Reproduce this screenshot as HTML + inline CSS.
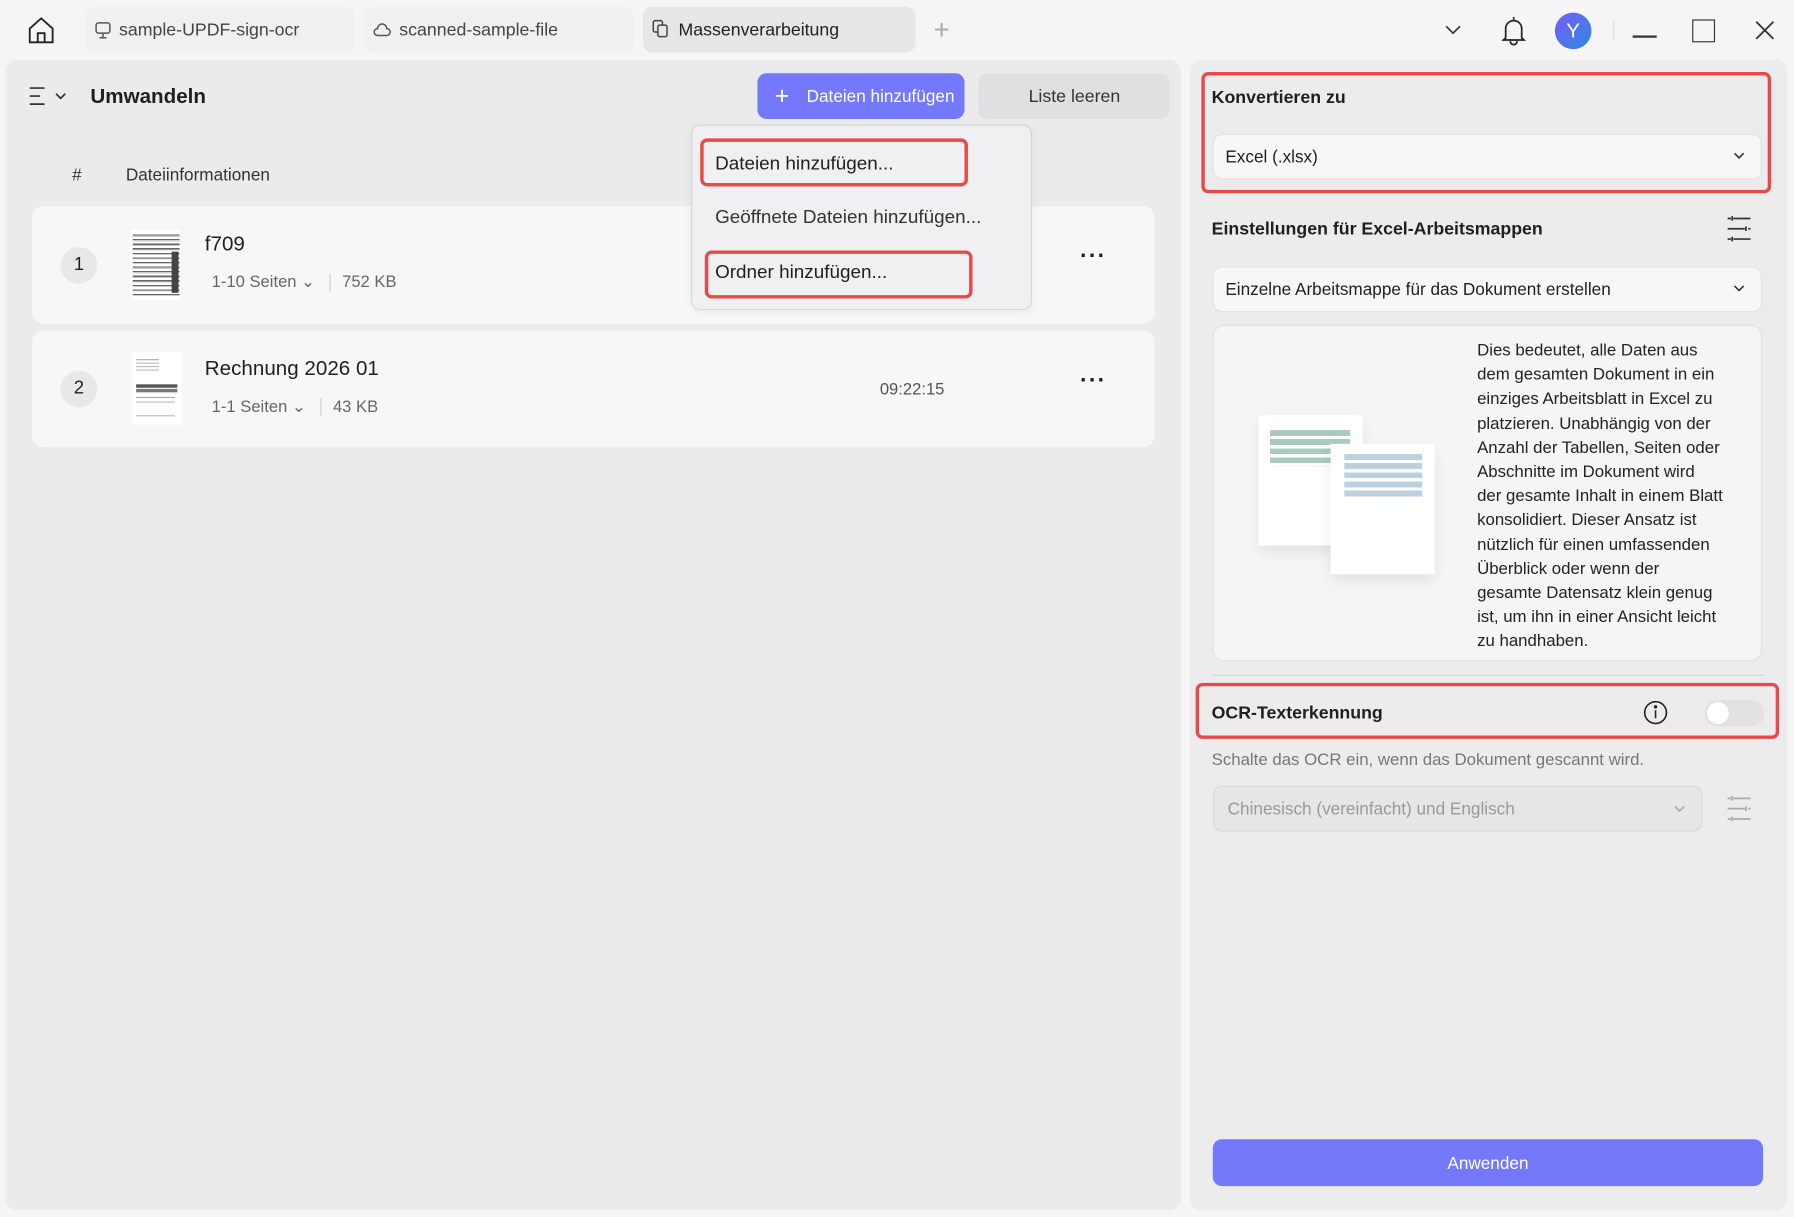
<!DOCTYPE html>
<html><head><meta charset="utf-8"><style>
html,body{margin:0;padding:0;width:1794px;height:1217px;overflow:hidden;background:#f5f5f6;}
#s{position:absolute;left:0;top:0;width:1568px;height:1064px;transform:scale(1.14413,1.14380);transform-origin:0 0;font-family:"Liberation Sans",sans-serif;color:#1f1f1f;}
.a{position:absolute;}
.t{position:absolute;white-space:nowrap;line-height:1;}
.red{position:absolute;border:3px solid #e84a4a;border-radius:6px;box-sizing:border-box;}
.sel{position:absolute;background:#f7f7f8;border:1px solid #e2e2e4;border-radius:8px;box-sizing:border-box;}
</style></head><body><div id="s">
<svg class="a" style="left:22px;top:12px" width="28" height="28" viewBox="0 0 28 28" fill="none" stroke="#222" stroke-width="1.6"><path d="M4 13 L14 4 L24 13 V25 H4 Z"/><path d="M11 25 V17 H17 V25"/></svg>
<div class="a" style="left:75px;top:6px;width:235px;height:40px;background:#f0f0f2;border-radius:8px"></div>
<svg class="a" style="left:83px;top:19px" width="14" height="16" viewBox="0 0 14 16" fill="none" stroke="#555" stroke-width="1.3"><rect x="1" y="1" width="12" height="9" rx="2"/><path d="M7 10v4M4 14h6"/></svg>
<div class="t" style="left:104px;top:19px;font-size:15.5px;color:#444">sample-UPDF-sign-ocr</div>
<div class="a" style="left:318px;top:6px;width:236px;height:40px;background:#f0f0f2;border-radius:8px"></div>
<svg class="a" style="left:326px;top:19px" width="16" height="14" viewBox="0 0 16 14" fill="none" stroke="#555" stroke-width="1.3"><path d="M4 12h8a3 3 0 0 0 0-6 4 4 0 0 0-8 0 3 3 0 0 0 0 6z"/></svg>
<div class="t" style="left:349px;top:19px;font-size:15.5px;color:#444">scanned-sample-file</div>
<div class="a" style="left:562px;top:6px;width:238px;height:40px;background:#e6e6e8;border-radius:8px"></div>
<svg class="a" style="left:570px;top:17px" width="14" height="16" viewBox="0 0 14 16" fill="none" stroke="#444" stroke-width="1.3"><rect x="1" y="1" width="8" height="10" rx="1.5"/><rect x="5" y="5" width="8" height="10" rx="1.5" fill="#e6e6e8"/></svg>
<div class="t" style="left:593px;top:19px;font-size:15.5px;color:#222">Massenverarbeitung</div>
<div class="t" style="left:816px;top:15px;font-size:24px;color:#aaa;font-weight:300">+</div>
<svg class="a" style="left:1262px;top:20px" width="16" height="12" viewBox="0 0 16 12" fill="none" stroke="#333" stroke-width="1.5"><path d="M2 3l6 6 6-6"/></svg>
<svg class="a" style="left:1311px;top:13px" width="24" height="28" viewBox="0 0 24 28" fill="none" stroke="#222" stroke-width="1.5"><path d="M12 2v2M5 20V12a7 7 0 0 1 14 0v8l2 2H3z"/><path d="M9 23a3 3 0 0 0 6 0"/></svg>
<div class="a" style="left:1359px;top:11px;width:32px;height:32px;border-radius:50%;background:linear-gradient(135deg,#7a5cf5,#2a8ae0);color:#fff;font-size:18px;text-align:center;line-height:32px">Y</div>
<div class="a" style="left:1410px;top:18px;width:1px;height:18px;background:#ddd"></div>
<div class="a" style="left:1427px;top:31px;width:21px;height:1.5px;background:#333"></div>
<div class="a" style="left:1479px;top:17px;width:18px;height:18px;border:1.6px solid #333"></div>
<svg class="a" style="left:1533px;top:17px" width="19" height="19" viewBox="0 0 19 19" stroke="#333" stroke-width="1.6"><path d="M2 2l15 15M17 2L2 17"/></svg>

<div class="a" style="left:5px;top:52px;width:1027px;height:1006px;background:#ebebed;border-radius:10px"></div>
<svg class="a" style="left:25px;top:75px" width="36" height="18" viewBox="0 0 36 18" fill="none" stroke="#333" stroke-width="1.5"><path d="M1 2h13M1 9h9M1 16h13"/><path d="M24 7l4 4 4-4"/></svg>
<div class="t" style="left:79px;top:75px;font-size:18px;font-weight:bold">Umwandeln</div>
<div class="a" style="left:662px;top:64px;width:181px;height:40px;background:#7478fb;border-radius:8px"></div>
<div class="t" style="left:677px;top:73px;font-size:22px;color:#fff;font-weight:300">+</div>
<div class="t" style="left:705px;top:77px;font-size:15px;color:#fff">Dateien hinzufügen</div>
<div class="a" style="left:855px;top:64px;width:167px;height:40px;background:#e0e0e2;border-radius:8px"></div>
<div class="t" style="left:899px;top:77px;font-size:15.5px;color:#333">Liste leeren</div>
<div class="t" style="left:63px;top:146px;font-size:15px;color:#333">#</div>
<div class="t" style="left:110px;top:146px;font-size:15px;color:#333">Dateiinformationen</div>

<div class="a" style="left:28px;top:180px;width:981px;height:103px;background:#f7f7f8;border-radius:10px"></div>
<div class="a" style="left:53px;top:216px;width:32px;height:32px;background:#e8e8ea;border-radius:50%;text-align:center;line-height:32px;font-size:16px">1</div>
<div class="a" style="left:115px;top:201px;width:43px;height:61px;background:#fff"></div>
<div class="a" style="left:116px;top:203px;width:41px;height:57px;background:repeating-linear-gradient(#fff 0 2px,#666 2px 3px,#ccc 3px 4px)"></div>
<div class="a" style="left:150px;top:220px;width:6px;height:36px;background:#444"></div>
<div class="t" style="left:179px;top:204px;font-size:18px">f709</div>
<div class="t" style="left:185px;top:240px;font-size:14.5px;color:#666">1-10 Seiten ⌄</div>
<div class="a" style="left:288px;top:239px;width:1px;height:16px;background:#ccc"></div>
<div class="t" style="left:299px;top:240px;font-size:14.5px;color:#666">752 KB</div>
<div class="t" style="left:944px;top:214px;font-size:20px;font-weight:bold;letter-spacing:1px">···</div>

<div class="a" style="left:28px;top:289px;width:981px;height:102px;background:#f7f7f8;border-radius:10px"></div>
<div class="a" style="left:53px;top:324px;width:32px;height:32px;background:#e8e8ea;border-radius:50%;text-align:center;line-height:32px;font-size:16px">2</div>
<div class="a" style="left:115px;top:308px;width:44px;height:63px;background:#fff"></div>
<div class="a" style="left:119px;top:314px;width:20px;height:1px;background:#aaa;box-shadow:0 3px 0 #bbb,0 6px 0 #bbb,0 9px 0 #bbb"></div>
<div class="a" style="left:119px;top:336px;width:36px;height:3px;background:#555;box-shadow:0 4px 0 #777"></div>
<div class="a" style="left:119px;top:347px;width:34px;height:1px;background:#aaa;box-shadow:0 4px 0 #bbb,0 16px 0 #bbb"></div>
<div class="t" style="left:179px;top:313px;font-size:18px">Rechnung 2026 01</div>
<div class="t" style="left:185px;top:349px;font-size:14.5px;color:#666">1-1 Seiten ⌄</div>
<div class="a" style="left:280px;top:348px;width:1px;height:16px;background:#ccc"></div>
<div class="t" style="left:291px;top:349px;font-size:14.5px;color:#666">43 KB</div>
<div class="t" style="left:769px;top:334px;font-size:14.5px;color:#555">09:22:15</div>
<div class="t" style="left:944px;top:323px;font-size:20px;font-weight:bold;letter-spacing:1px">···</div>

<div class="a" style="left:604px;top:109px;width:298px;height:162px;background:#f0f0f2;border:1px solid #d6d6d8;border-radius:8px;box-sizing:border-box;box-shadow:0 2px 8px rgba(0,0,0,.06)"></div>
<div class="red" style="left:612px;top:121px;width:234px;height:42px"></div>
<div class="t" style="left:625px;top:135px;font-size:16.5px">Dateien hinzufügen...</div>
<div class="t" style="left:625px;top:182px;font-size:16.5px;color:#333">Geöffnete Dateien hinzufügen...</div>
<div class="red" style="left:616px;top:219px;width:234px;height:42px"></div>
<div class="t" style="left:625px;top:230px;font-size:16.5px">Ordner hinzufügen...</div>

<div class="a" style="left:1040px;top:52px;width:522px;height:1006px;background:#ececed;border-radius:10px"></div>
<div class="red" style="left:1050px;top:63px;width:498px;height:106px"></div>
<div class="t" style="left:1059px;top:78px;font-size:15.5px;font-weight:bold">Konvertieren zu</div>
<div class="sel" style="left:1060px;top:117px;width:480px;height:40px"></div>
<div class="t" style="left:1071px;top:130px;font-size:15px">Excel (.xlsx)</div>
<svg class="a" style="left:1514px;top:132px" width="12" height="8" viewBox="0 0 12 8" fill="none" stroke="#333" stroke-width="1.4"><path d="M2 2l4 4 4-4"/></svg>
<div class="t" style="left:1059px;top:193px;font-size:15.5px;font-weight:bold">Einstellungen für Excel-Arbeitsmappen</div>
<svg class="a" style="left:1509px;top:188px" width="22" height="24" viewBox="0 0 22 24" fill="none" stroke="#333" stroke-width="1.5"><path d="M6 3h15M1 3h3M1 12h15M19 12h2M6 21h15M1 21h3"/><path d="M5 1v4M17 10v4M5 19v4"/></svg>
<div class="sel" style="left:1060px;top:233px;width:480px;height:40px"></div>
<div class="t" style="left:1071px;top:246px;font-size:15px">Einzelne Arbeitsmappe für das Dokument erstellen</div>
<svg class="a" style="left:1514px;top:248px" width="12" height="8" viewBox="0 0 12 8" fill="none" stroke="#333" stroke-width="1.4"><path d="M2 2l4 4 4-4"/></svg>
<div class="a" style="left:1060px;top:284px;width:480px;height:294px;background:#f5f5f6;border:1px solid #e2e2e4;border-radius:10px;box-sizing:border-box"></div>
<div class="a" style="left:1100px;top:363px;width:91px;height:114px;background:#fff;box-shadow:0 6px 12px rgba(0,0,0,.08)"></div>
<div class="a" style="left:1110px;top:376px;width:70px;height:32px;background:repeating-linear-gradient(#a8cbbd 0 5px,transparent 5px 8px)"></div>
<div class="a" style="left:1163px;top:388px;width:91px;height:114px;background:#fff;box-shadow:0 6px 12px rgba(0,0,0,.08)"></div>
<div class="a" style="left:1175px;top:397px;width:68px;height:40px;background:repeating-linear-gradient(#bcd0e0 0 5px,transparent 5px 8px)"></div>
<div class="a" style="left:1291px;top:297px;width:245px;font-size:14.7px;line-height:21.2px;color:#222">Dies bedeutet, alle Daten aus<br>dem gesamten Dokument in ein<br>einziges Arbeitsblatt in Excel zu<br>platzieren. Unabhängig von der<br>Anzahl der Tabellen, Seiten oder<br>Abschnitte im Dokument wird<br>der gesamte Inhalt in einem Blatt<br>konsolidiert. Dieser Ansatz ist<br>nützlich für einen umfassenden<br>Überblick oder wenn der<br>gesamte Datensatz klein genug<br>ist, um ihn in einer Ansicht leicht<br>zu handhaben.</div>
<div class="a" style="left:1060px;top:590px;width:482px;height:1px;background:#d6d6d8"></div>
<div class="red" style="left:1045px;top:597px;width:510px;height:49px"></div>
<div class="t" style="left:1059px;top:616px;font-size:15.5px;font-weight:bold">OCR-Texterkennung</div>
<svg class="a" style="left:1436px;top:612px" width="22" height="22" viewBox="0 0 22 22" fill="none" stroke="#222" stroke-width="1.4"><circle cx="11" cy="11" r="9.5"/><path d="M11 9v7"/><circle cx="11" cy="6" r=".8" fill="#222"/></svg>
<div class="a" style="left:1490px;top:612px;width:52px;height:23px;background:#e2e2e3;border-radius:12px"></div>
<div class="a" style="left:1492px;top:614px;width:19px;height:19px;background:#fff;border-radius:50%"></div>
<div class="t" style="left:1059px;top:658px;font-size:14.7px;color:#777">Schalte das OCR ein, wenn das Dokument gescannt wird.</div>
<div class="a" style="left:1060px;top:687px;width:428px;height:40px;background:#e6e6e7;border:1px solid #d8d8da;border-radius:8px;box-sizing:border-box"></div>
<div class="t" style="left:1073px;top:700px;font-size:15px;color:#999">Chinesisch (vereinfacht) und Englisch</div>
<svg class="a" style="left:1462px;top:703px" width="12" height="8" viewBox="0 0 12 8" fill="none" stroke="#aaa" stroke-width="1.4"><path d="M2 2l4 4 4-4"/></svg>
<svg class="a" style="left:1509px;top:695px" width="22" height="24" viewBox="0 0 22 24" fill="none" stroke="#aaa" stroke-width="1.5"><path d="M6 3h15M1 3h3M1 12h15M19 12h2M6 21h15M1 21h3"/><path d="M5 1v4M17 10v4M5 19v4"/></svg>
<div class="a" style="left:1060px;top:996px;width:481px;height:41px;background:#7479fb;border-radius:8px"></div>
<div class="t" style="left:1060px;top:1010px;width:481px;text-align:center;font-size:15px;color:#fff">Anwenden</div>
</div></body></html>
